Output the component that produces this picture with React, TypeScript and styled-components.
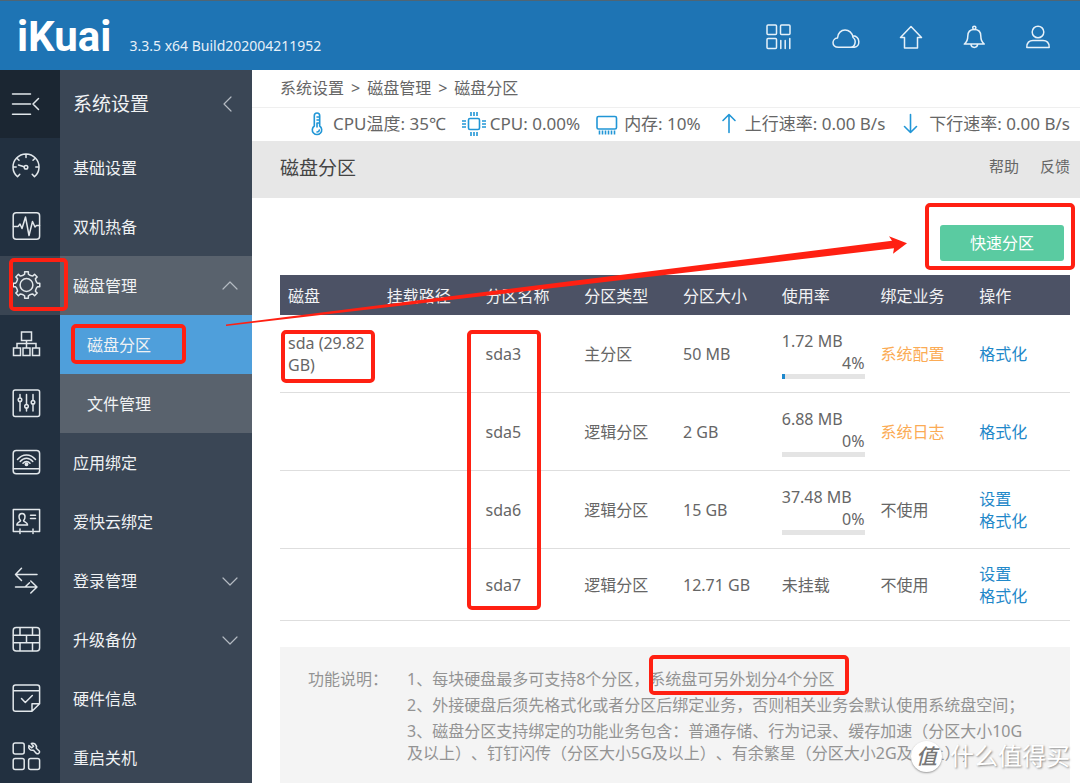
import React from 'react';
import styled, { createGlobalStyle } from 'styled-components';

const GlobalStyle = createGlobalStyle`
  * { box-sizing: border-box; }
  body {
    margin: 0;
    background: #fff;
    color: #666;
    font-family: "Noto Sans", "Noto Sans CJK SC", sans-serif;
    font-size: 16px;
    line-height: 22px;
    text-spacing-trim: space-all;
  }
  a { color: inherit; text-decoration: none; }
  button { font: inherit; color: inherit; background: none; border: 0; padding: 0; cursor: pointer; }
  ul, ol { list-style: none; margin: 0; padding: 0; }
  h1, h2, p { margin: 0; font-weight: 400; }
  svg { display: block; flex: none; }
`;

const Page = styled.div`
  position: relative;
  display: flex;
  flex-direction: column;
  height: 100vh;
  overflow: hidden;
`;

const Header = styled.header`
  flex: none;
  display: flex;
  align-items: center;
  justify-content: space-between;
  height: 70px;
  padding: 3px 28px 0 17px;
  border-top: 1px solid #4f6574;
  background: #1e74b4;
  color: #fff;
`;

const Brand = styled.div`
  display: flex;
  align-items: baseline;
  gap: 18px;
`;

const Logo = styled.span`
  font-family: Roboto, sans-serif;
  font-size: 42px;
  font-weight: 700;
  line-height: 48px;
`;

const Version = styled.span`
  font-size: 14px;
  color: #e6f0f8;
`;

const HeaderNav = styled.nav`
  display: flex;
  gap: 36px;
  color: #e6f1f9;
`;

const Body = styled.div`
  flex: 1;
  display: flex;
  min-height: 0;
`;

const Rail = styled.nav`
  flex: none;
  display: flex;
  flex-direction: column;
  width: 60px;
  background: #223040;
  color: #e2e7eb;
`;

const RailButton = styled.button<{ $tall?: boolean; $active?: boolean }>`
  position: relative;
  flex: none;
  display: flex;
  align-items: center;
  height: ${p => (p.$tall ? 68 : 59)}px;
  padding: 0 0 ${p => (p.$tall ? 0 : 2)}px 12px;
  background: ${p => (p.$tall ? '#1b2632' : p.$active ? '#3a4553' : 'transparent')};
`;

const SideMenu = styled.nav`
  flex: none;
  width: 192px;
  background: #3a4655;
  color: #f0f2f4;
`;

const SideTitle = styled.h2`
  display: flex;
  align-items: center;
  justify-content: space-between;
  height: 68px;
  padding: 0 14px 0 13px;
  font-size: 19px;
`;

const SideLink = styled.a<{ $tone?: 'open' | 'current'; $child?: boolean }>`
  position: relative;
  display: flex;
  align-items: center;
  justify-content: space-between;
  height: 59px;
  padding: 0 14px 0 ${p => (p.$child ? 27 : 13)}px;
  background: ${p => (p.$tone === 'current' ? '#4f9fdb' : p.$tone === 'open' ? '#59626d' : 'transparent')};
`;

const Main = styled.main`
  flex: 1;
  min-width: 0;
`;

const Breadcrumb = styled.nav`
  display: flex;
  align-items: center;
  gap: 7px;
  height: 38px;
  padding: 0 0 2px 28px;
  border-bottom: 1px solid #efefef;
`;

const Stats = styled.ul`
  display: flex;
  align-items: center;
  justify-content: flex-end;
  gap: 16px;
  height: 33px;
  padding: 0 10px 2px 0;
  font-size: 17px;
  white-space: nowrap;
`;

const Stat = styled.li`
  display: flex;
  align-items: center;
  gap: 4px;
  svg { color: #2196d6; }
`;

const TitleBar = styled.div`
  display: flex;
  align-items: center;
  justify-content: space-between;
  height: 57px;
  padding: 0 10px 4px 28px;
  background: #e7e7e7;
`;

const Title = styled.h1`
  font-size: 19px;
  color: #444;
`;

const HelpLinks = styled.div`
  display: flex;
  gap: 21px;
  padding-bottom: 3px;
  font-size: 15px;
`;

const Content = styled.div`
  padding: 27px 10px 0 28px;
`;

const Toolbar = styled.div`
  display: flex;
  justify-content: flex-end;
  padding: 0 6px 14px 0;
`;

const PrimaryButton = styled.button`
  position: relative;
  width: 124px;
  height: 36px;
  border-radius: 3px;
  background: #5acba1;
  color: #fff;
`;

const Table = styled.table`
  width: 100%;
  table-layout: fixed;
  border-collapse: separate;
  border-spacing: 0;
`;

const Th = styled.th`
  height: 40px;
  padding: 2px 8px 0;
  background: #4c5265;
  color: #f2f2f4;
  font-weight: 400;
  text-align: left;
`;

const Td = styled.td`
  position: relative;
  padding: 14px 8px 13px;
  border-bottom: 1px solid #dedede;
`;

const Usage = styled.div`
  height: 50px;
  padding-top: 1px;
`;

const Percent = styled.div`
  text-align: right;
`;

const Track = styled.div`
  height: 5px;
  background: #e4e4e4;
`;

const Fill = styled.div`
  height: 100%;
  background: #1e88cc;
`;

const Service = styled.span<{ $bound: boolean }>`
  color: ${p => (p.$bound ? '#fbab55' : 'inherit')};
`;

const Action = styled.a`
  display: block;
  color: #1f88c9;
`;

const Notes = styled.section`
  position: relative;
  display: flex;
  gap: 19px;
  min-height: 137px;
  margin-top: 26px;
  padding: 21px 28px 20px;
  background: #f4f4f4;
  color: #939393;
`;

const NotesLabel = styled.h2`
  flex: none;
  font-size: 16px;
`;

const NoteList = styled.ol`
  display: flex;
  flex-direction: column;
  gap: 4px;
  max-width: 628px;
`;

const Highlight = styled.span<{ $x: number; $y: number; $w: number; $h: number }>`
  position: absolute;
  z-index: 2;
  left: ${p => p.$x}px;
  top: ${p => p.$y}px;
  width: ${p => p.$w}px;
  height: ${p => p.$h}px;
  border: 4px solid #ff2012;
  border-radius: 5px;
  pointer-events: none;
`;

const ArrowLayer = styled.svg`
  position: absolute;
  z-index: 3;
  left: 226px;
  top: 234px;
  pointer-events: none;
`;

const Watermark = styled.div`
  position: absolute;
  z-index: 4;
  right: 10px;
  bottom: 11px;
  display: flex;
  align-items: center;
  gap: 8px;
  color: #fff;
  font-size: 24px;
  line-height: 32px;
  text-shadow: 1px 1px 2px #888;
`;

const Seal = styled.span`
  width: 31px;
  height: 31px;
  border-radius: 50%;
  background: #fff;
  box-shadow: 0 1px 2px #999;
  color: #777;
  font-size: 21px;
  font-style: italic;
  font-weight: 500;
  line-height: 30px;
  text-align: center;
  text-shadow: none;
`;

function Icon({ w = 28, h = 28, sw = 1.5, children }: { w?: number; h?: number; sw?: number; children: React.ReactNode }) {
  return (
    <svg width={w} height={h} viewBox={`0 0 ${w} ${h}`} fill="none" stroke="currentColor" strokeWidth={sw} strokeLinecap="round" strokeLinejoin="round" overflow="visible" aria-hidden="true">
      {children}
    </svg>
  );
}

const gearPath = (() => {
  const points: string[] = [];
  for (let i = 0; i < 8; i++) {
    const base = (i * Math.PI) / 4 - Math.PI / 2;
    [[-0.29, 10.4], [-0.17, 11], [-0.14, 13.4], [0.14, 13.4], [0.17, 11], [0.29, 10.4]].forEach(([a, r]) => {
      points.push(`${(14.5 + r * Math.cos(base + a)).toFixed(2)} ${(14 + r * Math.sin(base + a)).toFixed(2)}`);
    });
  }
  return `M${points.join('L')}Z`;
})();

const railIcons: { label: string; active?: boolean; icon: React.ReactNode }[] = [
  {
    label: '系统概况',
    icon: (
      <>
        <path d="M5.5 23.8A13 13 0 1 1 22.5 23.8M5.5 23.8L7.8 21.2M22.5 23.8L20.2 21.2M14 1.4V4.4M4.9 5.2L7 7.3M23.1 5.2L21 7.3M1 14H4.2M27 14H23.8M6.5 12L12.2 13.8" />
        <circle cx="14" cy="14.3" r="1.8" />
      </>
    ),
  },
  {
    label: '状态监控',
    icon: (
      <>
        <rect x="1.2" y=".8" width="26.4" height="26.4" rx="3" />
        <path d="M1.5 14.5H6L8 12L10 16.5L13.5 5L17 23.5L20.5 9.5L23 15L24.5 13.5H27.5" />
      </>
    ),
  },
  {
    label: '系统设置',
    active: true,
    icon: (
      <>
        <path d={gearPath} />
        <circle cx="14.5" cy="14" r="6.4" />
      </>
    ),
  },
  {
    label: '网络设置',
    icon: (
      <path strokeLinejoin="miter" d="M9.5 2H19.5V10.5H9.5ZM14.5 10.5V18M5 18V13.5H24V18M1.5 18H8.5V25.5H1.5ZM11 18H18V25.5H11ZM20.5 18H27.5V25.5H20.5Z" />
    ),
  },
  {
    label: '流控分流',
    icon: (
      <>
        <rect x="1.2" y="1" width="26.4" height="26.4" rx="2" />
        <path d="M8 5.5V9M8 12.5V22M14.5 5.5V15.5M14.5 19V22M21 5.5V11.5M21 15V22" />
        <circle cx="8" cy="10.7" r="1.8" />
        <circle cx="14.5" cy="17.2" r="1.8" />
        <circle cx="21" cy="13.2" r="1.8" />
      </>
    ),
  },
  {
    label: '无线管理',
    icon: (
      <>
        <rect x="1.2" y="2.4" width="26.4" height="23.4" rx="3" />
        <path d="M1.5 20.8H27.3M5.5 11.5C10.5 5.5 18.5 5.5 23.5 11.5M8.2 13.5C11.8 9 17.2 9 20.8 13.5M11 15.3C13 12.8 16 12.8 18 15.3" />
        <circle cx="14.5" cy="16.3" r="1.2" fill="currentColor" />
      </>
    ),
  },
  {
    label: '认证计费',
    icon: (
      <>
        <path d="M7 24.5H1.3V2.5H27.6V24.5H22.5M9.5 24.5H19.5M8 22V26.5M21 22V26.5M18.5 8.3H23.5M18.5 11.5H23.5" />
        <path d="M10 6.5C7.5 6.5 7 8.4 7 9.8C7 11.8 7.8 12.8 8.5 13.6C8.3 15 4.8 14.8 4.8 18H15.6C15.6 14.8 11.7 15 11.6 13.6C12.4 12.8 13 11.8 13 9.8C13 8.4 12.5 6.5 10 6.5Z" />
      </>
    ),
  },
  {
    label: '端口映射',
    icon: <path d="M25 8.5H3.5L9.5 2.3M3.5 8.5L9.5 14.5M3.5 21H25L18.8 15M25 21L18.8 27M13 21L17.5 16.8" />,
  },
  {
    label: '安全设置',
    icon: (
      <>
        <rect x="1.2" y="2.5" width="26.4" height="23.4" rx="3" />
        <path d="M1.5 10.2H27.3M1.5 17.8H27.3M8 2.8V10M20.5 2.8V10M14.5 10.5V17.5M8 18V25.5M20.5 18V25.5" />
      </>
    ),
  },
  {
    label: '日志中心',
    icon: (
      <path d="M20 27.3H3.5Q1.2 27.3 1.2 25V3.3Q1.2 1 3.5 1H25.3Q27.6 1 27.6 3.3V19.8L20 27.3ZM20 27.3V19.8H27.6M1.5 6.8H27.3M9.5 14.5L13.3 18.5L20.3 11.5" />
    ),
  },
  {
    label: '应用工具',
    icon: (
      <>
        <rect x="1.2" y="0" width="11" height="11" rx="2" />
        <rect x="1.2" y="15.4" width="11" height="11" rx="2" />
        <rect x="16.6" y="15.4" width="11" height="11" rx="2" />
        <path d="M19.3 .5C22 -.4 25.2 1.5 24.3 5.3L27.5 8.3C28 9.9 26 11.6 24.4 10.4L21.5 7.2C18.4 8 16 5.4 16.9 2.5L19.8 4.8L21.6 3.2Z" />
      </>
    ),
  },
];

function Chevron({ dir }: { dir: 'up' | 'down' | 'left' }) {
  const d = { up: 'M1 11L8 4L15 11', down: 'M1 5L8 12L15 5', left: 'M9 1L2 8L9 15' }[dir];
  return (
    <Icon w={16} h={16} sw={1.2}>
      <path d={d} stroke="#b4bac2" />
    </Icon>
  );
}

const headerIcons = [
  {
    label: '应用中心',
    icon: <path transform="translate(-3 0)" d="M3 2H10.5Q11.5 2 11.5 3V10.5Q11.5 11.5 10.5 11.5H3Q2 11.5 2 10.5V3Q2 2 3 2ZM16.5 2H24Q25 2 25 3V10.5Q25 11.5 24 11.5H16.5Q15.5 11.5 15.5 10.5V3Q15.5 2 16.5 2ZM3 15.5H10.5Q11.5 15.5 11.5 16.5V24.5Q11.5 25.5 10.5 25.5H3Q2 25.5 2 24.5V16.5Q2 15.5 3 15.5ZM15.8 17.5V25.5M20.2 17.5V25.5M24.8 15.5V25.5" />,
  },
  {
    label: '云服务',
    icon: <path d="M6.5 24.3C-1 24 -.3 15.5 5.5 15C6 4.5 19.8 4.5 21 14.5C25 17.5 23 24.3 18.5 24.3H6.5ZM18.5 24.3H22.5C28.5 23.5 28.5 13.5 21 12.8" />,
  },
  {
    label: '升级',
    icon: <path d="M15 3.5L25.5 14.5H21.5V25H8.5V14.5H4.5Z" />,
  },
  {
    label: '通知',
    icon: (
      <>
        <circle cx="14.3" cy="4.8" r="1.6" />
        <path d="M4.3 21H24.3C21.3 19 20.8 17 20.8 13C20.8 8.5 17.8 6.5 14.3 6.5S7.8 8.5 7.8 13C7.8 17 7.3 19 4.3 21ZM10.8 21.2C11.6 25.5 17 25.5 17.8 21.2" />
      </>
    ),
  },
  {
    label: '账户',
    icon: (
      <>
        <circle cx="14" cy="9" r="5.8" />
        <path d="M2.8 24.5C2.5 19.5 5.5 17.5 9 17.5H19C22.5 17.5 25.5 19.5 25.2 24.5Z" />
      </>
    ),
  },
];

const stats = [
  {
    text: 'CPU温度: 35℃',
    icon: (
      <path d="M9.3 14V3.8Q9.3 1 12 1T14.7 3.8V14A4.7 4.7 0 1 1 9.3 14ZM12 5H14.5M12 8H14.5M12 11H14.5M12 11V15M14.3 18Q14 20 12 20" />
    ),
  },
  {
    text: 'CPU: 0.00%',
    icon: (
      <>
        <rect x="6.5" y="6.5" width="11" height="11" rx="1.5" />
        <path strokeLinecap="butt" d="M9 0V4M12 0V4M15 0V4M9 20V24M12 20V24M15 20V24M0 9H4M0 12H4M0 15H4M20 9H24M20 12H24M20 15H24" />
      </>
    ),
  },
  {
    text: '内存: 10%',
    icon: (
      <>
        <rect x="1" y="4.5" width="19.5" height="12.5" rx="1.5" />
        <path strokeLinecap="butt" d="M3.5 18.5V22.5M6.5 18.5V22.5M9.5 18.5V22.5M12.5 18.5V22.5M15.5 18.5V22.5M18.5 18.5V22.5" />
      </>
    ),
  },
  { text: '上行速率: 0.00 B/s', icon: <path d="M12 20.5V2.5M6 8.5L12 2.5L18 8.5" /> },
  { text: '下行速率: 0.00 B/s', icon: <path d="M9.5 2.5V20.5M3.5 14.5L9.5 20.5L15.5 14.5" /> },
];

const columns = ['磁盘', '挂载路径', '分区名称', '分区类型', '分区大小', '使用率', '绑定业务', '操作'];

const partitions = [
  { disk: 'sda (29.82 GB)', name: 'sda3', type: '主分区', size: '50 MB', used: '1.72 MB', percent: 4, service: '系统配置', bound: true, actions: ['格式化'] },
  { disk: '', name: 'sda5', type: '逻辑分区', size: '2 GB', used: '6.88 MB', percent: 0, service: '系统日志', bound: true, actions: ['格式化'] },
  { disk: '', name: 'sda6', type: '逻辑分区', size: '15 GB', used: '37.48 MB', percent: 0, service: '不使用', bound: false, actions: ['设置', '格式化'] },
  { disk: '', name: 'sda7', type: '逻辑分区', size: '12.71 GB', used: null, percent: 0, service: '不使用', bound: false, actions: ['设置', '格式化'] },
];

const notes = [
  '1、每块硬盘最多可支持8个分区，系统盘可另外划分4个分区',
  '2、外接硬盘后须先格式化或者分区后绑定业务，否则相关业务会默认使用系统盘空间；',
  '3、磁盘分区支持绑定的功能业务包含：普通存储、行为记录、缓存加速（分区大小10G及以上）、钉钉闪传（分区大小5G及以上）、有余繁星（分区大小2G及以上）；',
];

export default function App() {
  return (
    <Page>
      <GlobalStyle />
      <Header>
        <Brand>
          <Logo>iKuai</Logo>
          <Version>3.3.5 x64 Build202004211952</Version>
        </Brand>
        <HeaderNav>
          {headerIcons.map(item => (
            <button key={item.label} aria-label={item.label}>
              <Icon>{item.icon}</Icon>
            </button>
          ))}
        </HeaderNav>
      </Header>
      <Body>
        <Rail>
          <RailButton $tall aria-label="收起菜单">
            <Icon>
              <path d="M.5 4H18.5M.5 14H18.5M.5 24.3H18.5M26.5 8.5L21 14L26.5 19.5" />
            </Icon>
          </RailButton>
          {railIcons.map(item => (
            <RailButton key={item.label} $active={item.active} aria-label={item.label}>
              <Icon>{item.icon}</Icon>
              {item.active && <Highlight $x={9} $y={2} $w={59} $h={53} />}
            </RailButton>
          ))}
        </Rail>
        <SideMenu>
          <SideTitle>
            系统设置
            <Chevron dir="left" />
          </SideTitle>
          <SideLink href="#basic">基础设置</SideLink>
          <SideLink href="#standby">双机热备</SideLink>
          <SideLink href="#disk" $tone="open">
            磁盘管理
            <Chevron dir="up" />
          </SideLink>
          <SideLink href="#partition" $tone="current" $child>
            磁盘分区
            <Highlight $x={11} $y={9} $w={115} $h={40} />
          </SideLink>
          <SideLink href="#files" $tone="open" $child>文件管理</SideLink>
          <SideLink href="#binding">应用绑定</SideLink>
          <SideLink href="#cloud">爱快云绑定</SideLink>
          <SideLink href="#login">
            登录管理
            <Chevron dir="down" />
          </SideLink>
          <SideLink href="#upgrade">
            升级备份
            <Chevron dir="down" />
          </SideLink>
          <SideLink href="#hardware">硬件信息</SideLink>
          <SideLink href="#power">重启关机</SideLink>
        </SideMenu>
        <Main>
          <Breadcrumb>
            <a href="#system">系统设置</a>
            <span>&gt;</span>
            <a href="#disk">磁盘管理</a>
            <span>&gt;</span>
            <a href="#partition">磁盘分区</a>
          </Breadcrumb>
          <Stats>
            {stats.map(stat => (
              <Stat key={stat.text}>
                <Icon w={24} h={24} sw={1.6}>{stat.icon}</Icon>
                {stat.text}
              </Stat>
            ))}
          </Stats>
          <TitleBar>
            <Title>磁盘分区</Title>
            <HelpLinks>
              <a href="#help">帮助</a>
              <a href="#feedback">反馈</a>
            </HelpLinks>
          </TitleBar>
          <Content>
            <Toolbar>
              <PrimaryButton>
                快速分区
                <Highlight $x={-15} $y={-22} $w={150} $h={67} />
              </PrimaryButton>
            </Toolbar>
            <Table>
              <thead>
                <tr>
                  {columns.map(column => (
                    <Th key={column} scope="col">{column}</Th>
                  ))}
                </tr>
              </thead>
              <tbody>
                {partitions.map((row, index) => (
                  <tr key={row.name}>
                    <Td>
                      {row.disk}
                      {index === 0 && <Highlight $x={1} $y={15} $w={94} $h={53} />}
                    </Td>
                    <Td />
                    <Td>
                      {row.name}
                      {index === 0 && <Highlight $x={-11} $y={15} $w={74} $h={280} />}
                    </Td>
                    <Td>{row.type}</Td>
                    <Td>{row.size}</Td>
                    <Td>
                      {row.used === null ? (
                        '未挂载'
                      ) : (
                        <Usage>
                          {row.used}
                          <Percent>{row.percent}%</Percent>
                          <Track>
                            <Fill style={{ width: `${row.percent}%` }} />
                          </Track>
                        </Usage>
                      )}
                    </Td>
                    <Td>
                      <Service $bound={row.bound}>{row.service}</Service>
                    </Td>
                    <Td>
                      {row.actions.map(action => (
                        <Action key={action} href={`#${row.name}`}>{action}</Action>
                      ))}
                    </Td>
                  </tr>
                ))}
              </tbody>
            </Table>
            <Notes>
              <NotesLabel>功能说明：</NotesLabel>
              <NoteList>
                {notes.map(note => (
                  <li key={note}>{note}</li>
                ))}
              </NoteList>
              <Highlight $x={369} $y={8} $w={200} $h={40} />
            </Notes>
          </Content>
        </Main>
      </Body>
      <ArrowLayer width="684" height="94" viewBox="0 0 684 94" aria-hidden="true">
        <path fill="#ff2012" d="M0 90.5L666 6.8L663 2.3L681 9.3L667 19.7L668 14.3L0 92Z" />
      </ArrowLayer>
      <Watermark>
        <Seal>值</Seal>
        什么值得买
      </Watermark>
    </Page>
  );
}
